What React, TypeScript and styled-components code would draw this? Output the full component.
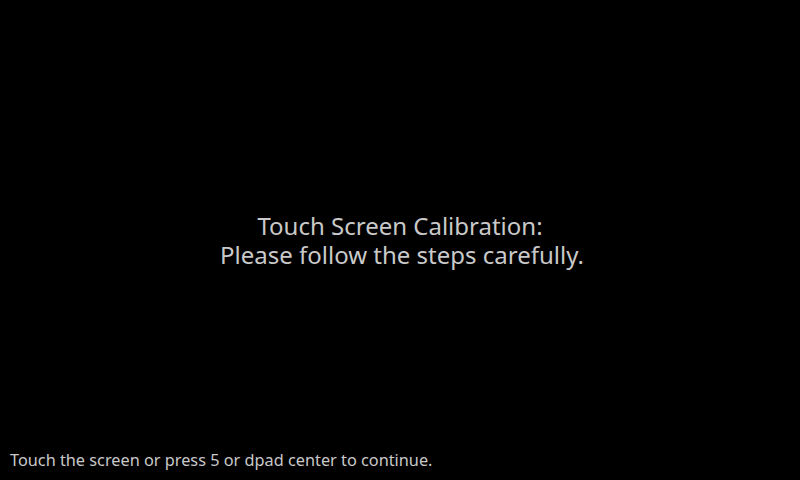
import React from "react";
import styled, { createGlobalStyle } from "styled-components";

const GlobalStyle = createGlobalStyle`
  html, body {
    margin: 0;
    padding: 0;
    background: #000;
  }
`;

const Screen = styled.div`
  width: 800px;
  height: 480px;
  background: #000;
  color: #c9c9c9;
  font-family: "Noto Sans", "Open Sans", sans-serif;
  display: grid;
  grid-template-rows: 1fr auto 1fr;
  overflow: hidden;
`;

const Title = styled.div`
  grid-row: 2;
  display: flex;
  flex-direction: column;
  align-items: center;
  font-size: 24px;
  line-height: 29px;
`;

const Line = styled.div<{ $shift?: number }>`
  white-space: nowrap;
  margin-left: ${(p) => p.$shift ?? 0}px;
`;

const Footer = styled.div`
  grid-row: 3;
  align-self: end;
  padding: 0 0 9px 10px;
  font-size: 16.3px;
  line-height: 22px;
`;

export default function App() {
  return (
    <>
      <GlobalStyle />
      <Screen>
        <Title>
          <Line>Touch Screen Calibration:</Line>
          <Line $shift={4}>Please follow the steps carefully.</Line>
        </Title>
        <Footer>Touch the screen or press 5 or dpad center to continue.</Footer>
      </Screen>
    </>
  );
}
